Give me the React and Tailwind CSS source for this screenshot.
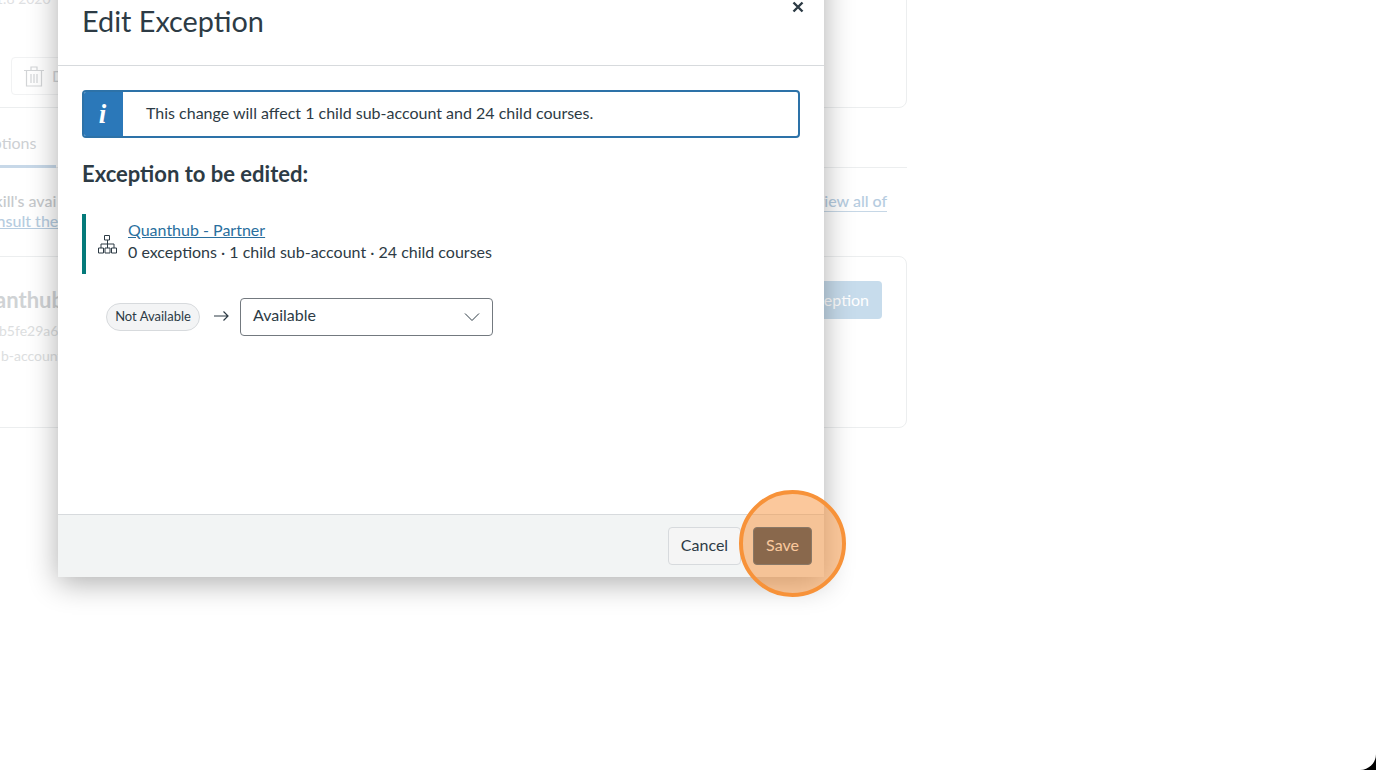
// App.jsx
import React from "react";

// Faded page behind the dialog. Left edge runs off the window, as in the capture.
function BackgroundPage() {
  return (
    <div className="ml-[-200px] w-[1107px] text-[#c9cccf]">
      <div className="mt-[-40px] h-[148px] rounded-br-lg rounded-tr-lg border border-[#eceeef] pl-[200px]">
        <div className="ml-[-6px] mt-[28px] text-sm leading-[20px] text-[#dfe1e3]">1.8 2020</div>
        <div className="ml-[10px] mt-[48px] flex h-[38px] w-[100px] items-center gap-[8px] rounded border border-[#f1f2f3] pl-[13px] text-base text-[#d0d3d6]">
          <TrashIcon />
          <span>Delete</span>
        </div>
      </div>

      <div className="relative h-[60px] border-b border-[#eceeef] pl-[200px]">
        <div className="pt-[25px] text-base leading-[20px] text-[#cdd0d3]">
          <span className="ml-[-40px]">Exceptions</span>
        </div>
        <div className="absolute bottom-[-1px] left-[100px] h-[3px] w-[156px] bg-[#c7d8e8]" />
      </div>

      <div className="relative h-[88px] pl-[200px] pt-[23px] text-base leading-[20px]">
        <div className="ml-[-14px] font-medium text-[#c6c9cc]">Skill's avai</div>
        <div className="ml-[-20px] font-medium text-[#b6cce0] underline">consult the</div>
        <div className="absolute left-[1016px] top-[23px] border-b border-[#c6d7e6] font-medium text-[#b6cce0]">
          view all of
        </div>
      </div>

      <div className="flex h-[172px] justify-between rounded-lg border border-[#eceeef] pl-[200px] pr-[24px]">
        <div className="pt-[29px]">
          <div className="ml-[-36px] text-[22px] font-bold leading-[28px] text-[#d0d3d5]">Quanthub</div>
          <div className="ml-[-2px] mt-[7px] text-sm leading-[20px] text-[#dcdee0]">b5fe29a6</div>
          <div className="mt-[5px] text-sm leading-[20px] text-[#dcdee0]">b-account</div>
        </div>
        <div className="mt-[24px] flex h-[38px] w-[140px] items-center justify-end rounded bg-[#c7dcec] pr-[13px] text-base text-white">
          Add Exception
        </div>
      </div>
    </div>
  );
}

function TrashIcon() {
  return (
    <svg className="ml-[-1px]" width="20" height="21" viewBox="0 0 20 21" fill="none" stroke="#d3d5d7" strokeWidth="1.2">
      <path d="M0 4.5h20M7 4.5V1h6v3.5M2.5 4.5V20h15V4.5M7 8v9M10 8v9M13 8v9" />
    </svg>
  );
}

function OrgIcon() {
  return (
    <svg width="19" height="19" viewBox="0 0 19 19" fill="none" stroke="#2d3b45" strokeWidth="1">
      <path d="M6.5 0.5h5v4.5h-5zM9.5 5v8M3 9h13v4M3 9v4M0.5 13h5v5h-5zM7 13h5v5H7zM13.5 13h5v5h-5z" />
    </svg>
  );
}

function EditDialog() {
  return (
    <div className="absolute left-[58px] top-[-40px] flex h-[617px] w-[766px] flex-col bg-white text-[#2d3b45] shadow-[0_6px_28px_rgba(0,0,0,0.32)]">
      <div className="relative h-[106px] border-b border-[#d7dadd] pl-[24px] pt-[43px]">
        <h2 className="text-[28.8px] font-normal leading-[36px]">Edit Exception</h2>
        <svg className="absolute right-[20px] top-[41px]" width="12" height="12" viewBox="0 0 12 12" stroke="#2d3b45" strokeWidth="2.4">
          <path d="M1.5 1.5l9 9M10.5 1.5l-9 9" />
        </svg>
      </div>

      <div className="flex-1 px-[24px] pt-[24px]">
        <div className="flex h-[48px] w-[718px] overflow-hidden rounded-[4px] border-2 border-[#2d72a8]">
          <div className="flex w-[39px] items-center justify-center bg-[#2b78b9] pr-[2px] font-['Liberation_Serif',serif] text-[27px] font-bold italic text-white">
            i
          </div>
          <div className="flex items-center pb-[2px] pl-[23px] text-base">
            This change will affect 1 child sub-account and 24 child courses.
          </div>
        </div>

        <h3 className="mt-[22px] text-[22px] font-bold leading-[28px]">Exception to be edited:</h3>

        <div className="mt-[26px] flex h-[60px] items-center border-l-4 border-[#047a7a] pl-[12px]">
          <OrgIcon />
          <div className="ml-[11px] mt-[-6px] text-base leading-[22px]">
            <a className="text-[#2a6f9e] underline">Quanthub - Partner</a>
            <div>0 exceptions · 1 child sub-account · 24 child courses</div>
          </div>
        </div>

        <div className="ml-[24px] mt-[24px] flex items-center">
          <span className="flex h-[28px] w-[94px] items-center justify-center rounded-full border border-[#d7dadd] bg-[#f3f4f5] text-[13px]">
            Not Available
          </span>
          <svg className="ml-[13px] mt-[-2px]" width="16" height="12" viewBox="0 0 16 12" fill="none" stroke="#2d3b45" strokeWidth="1.2">
            <path d="M1 6h14M10.5 1.5L15 6l-4.5 4.5" />
          </svg>
          <div className="ml-[11px] flex h-[38px] w-[253px] items-center justify-between rounded-[4px] border border-[#73797f] pb-[5px] pl-[12px] pr-[12px] text-base">
            Available
            <svg className="mt-[5px]" width="16" height="10" viewBox="0 0 16 10" fill="none" stroke="#2d3b45" strokeWidth="1">
              <path d="M1 1.5l7 7 7-7" />
            </svg>
          </div>
        </div>
      </div>

      <div className="flex h-[63px] items-center justify-end gap-[12px] border-t border-[#d7dadd] bg-[#f2f4f4] pr-[12px]">
        <button type="button" className="h-[38px] w-[73px] rounded-[4px] border border-[#d7dadd] bg-[#f5f5f5] pb-[2px] text-base">
          Cancel
        </button>
        <button type="button" className="h-[38px] w-[59px] rounded-[4px] border border-[#1d5e92] bg-[#1a3f5e] pb-[2px] text-base text-white">
          Save
        </button>
      </div>
    </div>
  );
}

export default function App() {
  return (
    <div className="h-[770px] w-[1376px] overflow-hidden bg-black font-['Lato','Open_Sans',sans-serif]">
      <div className="relative h-full overflow-hidden rounded-br-[16px] bg-white">
        <BackgroundPage />
        <EditDialog />
        {/* highlight ring around the Save button */}
        <div className="absolute left-[739px] top-[490px] h-[107px] w-[107px] rounded-full border-4 border-[#f79239] bg-[#f79239]/50" />
      </div>
    </div>
  );
}
